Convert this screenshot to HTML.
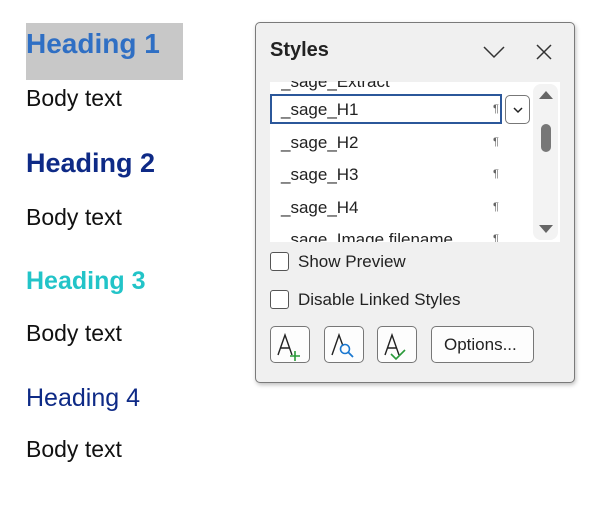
<!DOCTYPE html>
<html><head><style>
body{margin:0;width:601px;height:507px;background:#fff;font-family:"Liberation Sans",sans-serif;position:relative;overflow:hidden}
.a{position:absolute;white-space:nowrap}
.h{font-weight:bold;font-size:27px}
.b{font-size:23px;color:#111}
.panel{position:absolute;left:255px;top:22px;width:318px;height:359px;background:#f0f0f0;border:1.5px solid #7a7a7a;border-radius:5px;box-shadow:1px 2px 4px rgba(0,0,0,.25)}
.list{position:absolute;left:270px;top:82px;width:290px;height:160px;background:#fff;overflow:hidden}
.it{position:absolute;left:281px;font-size:17px;color:#222}
.pm{position:absolute;left:493px;font-size:11px;color:#666}
.cb{position:absolute;left:270px;width:17px;height:17px;border:1.5px solid #555;border-radius:3px;background:#fff}
.btn{position:absolute;top:326px;height:35px;border:1.5px solid #777;border-radius:5px;background:#fdfdfd}
</style></head><body>
<div class="a" style="left:26px;top:23px;width:157px;height:57px;background:#c8c8c8"></div>
<div class="a h" style="left:26px;top:28px;color:#2f6fc4;font-size:28px">Heading 1</div>
<div class="a b" style="left:26px;top:85px">Body text</div>
<div class="a h" style="left:26px;top:148px;color:#0e2a86">Heading 2</div>
<div class="a b" style="left:26px;top:204px">Body text</div>
<div class="a h" style="left:26px;top:267px;color:#22c4c8;font-size:25px">Heading 3</div>
<div class="a b" style="left:26px;top:320px">Body text</div>
<div class="a" style="left:26px;top:384px;color:#0e2a86;font-size:25px">Heading 4</div>
<div class="a b" style="left:26px;top:436px">Body text</div>

<div class="panel"></div>
<div class="a" style="left:270px;top:39px;font-size:20px;font-weight:bold;color:#222">Styles</div>
<svg class="a" style="left:482px;top:44px" width="24" height="16"><path d="M2 3 L12 13 L22 3" fill="none" stroke="#333" stroke-width="1.5"/></svg>
<svg class="a" style="left:535px;top:43px" width="18" height="18"><path d="M2 2L16 16M16 2L2 16" fill="none" stroke="#333" stroke-width="1.5"/></svg>
<div class="list"></div>
<div class="a" style="left:533px;top:84px;width:25px;height:156px;background:#f3f3f3;border-radius:8px"></div>
<svg class="a" style="left:538px;top:88px" width="16" height="150"><path d="M1 11L8 3L15 11Z" fill="#666"/><rect x="3" y="36" width="10" height="28" rx="5" fill="#777"/><path d="M1 137L8 145L15 137Z" fill="#666"/></svg>
<div class="it" style="top:72px;clip-path:inset(9px 0 0 0)">_sage_Extract</div>
<div class="a" style="left:270px;top:94px;width:232px;height:30px;border:2px solid #2b579a;box-sizing:border-box;background:#fff"></div>
<div class="it" style="top:100px">_sage_H1</div><div class="pm" style="top:103px">¶</div>
<div class="a" style="left:505px;top:95px;width:25px;height:29px;border:1.5px solid #777;border-radius:5px;box-sizing:border-box;background:#fff"></div>
<svg class="a" style="left:512px;top:106px" width="12" height="8"><path d="M2 2L6 6L10 2" fill="none" stroke="#222" stroke-width="1.5"/></svg>
<div class="it" style="top:133px">_sage_H2</div><div class="pm" style="top:136px">¶</div>
<div class="it" style="top:165px">_sage_H3</div><div class="pm" style="top:168px">¶</div>
<div class="it" style="top:198px">_sage_H4</div><div class="pm" style="top:201px">¶</div>
<div class="it" style="top:230px;height:12px;overflow:hidden">_sage_Image filename</div><div class="pm" style="top:233px;height:9px;overflow:hidden">¶</div>
<div class="cb" style="top:252px"></div>
<div class="a" style="left:298px;top:252px;font-size:17px;color:#222">Show Preview</div>
<div class="cb" style="top:290px"></div>
<div class="a" style="left:298px;top:290px;font-size:17px;color:#222">Disable Linked Styles</div>
<div class="btn" style="left:270px;width:38px"></div>
<div class="btn" style="left:324px;width:38px"></div>
<div class="btn" style="left:377px;width:38px"></div>
<div class="btn" style="left:431px;width:101px"></div>
<svg class="a" style="left:270px;top:326px" width="270" height="38">
<path d="M8 29L15 9L22 29M10.5 22H19.5" fill="none" stroke="#222" stroke-width="1.4"/>
<path d="M25 25V35M20 30H30" stroke="#2a9a3a" stroke-width="1.6"/>
<path d="M62 29L69 9L73 20" fill="none" stroke="#222" stroke-width="1.4"/>
<circle cx="75" cy="23" r="4.5" fill="none" stroke="#1b78d0" stroke-width="1.6"/><path d="M78 26L83 31" stroke="#1b78d0" stroke-width="1.8"/>
<path d="M115 29L122 9L129 29M117.5 22H126.5" fill="none" stroke="#222" stroke-width="1.4"/>
<path d="M121 28L126 33L135 24" fill="none" stroke="#2a9a3a" stroke-width="1.6"/>
</svg>
<div class="a" style="left:444px;top:335px;font-size:17px;color:#222">Options...</div>
</body></html>
